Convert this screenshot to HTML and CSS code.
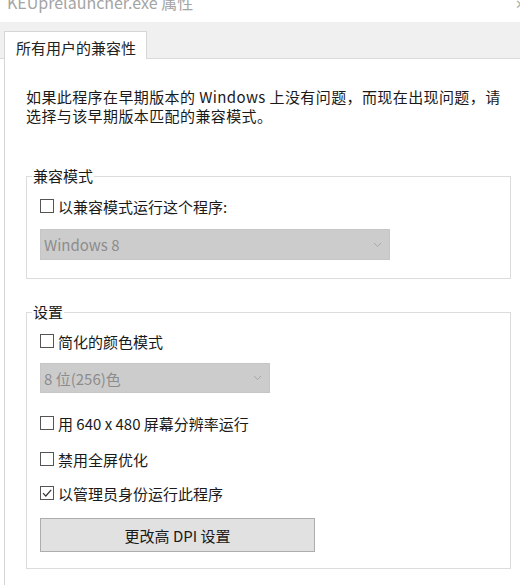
FILE: index.html
```html
<!DOCTYPE html>
<html lang="zh-CN">
<head>
    <meta charset="UTF-8">
    <meta name="viewport" content="width=device-width, initial-scale=1.0">
    <title>KEUprelauncher.exe 属性</title>
    <link rel="stylesheet" href="styles.css">
</head>
<body>
    <div class="window">
        <!-- Title bar (cut off at the top) -->
        <div class="titlebar">
            <span class="title">KEUprelauncher.exe 属性</span>
            <span class="close">✕</span>
        </div>

        <!-- Tabs -->
        <div class="tabs">
            <div class="tab">所有用户的兼容性</div>
        </div>

        <div class="panel">
            <p class="intro">如果此程序在早期版本的 Windows 上没有问题，而现在出现问题，请<br>选择与该早期版本匹配的兼容模式。</p>

            <fieldset class="group group-mode">
                <legend>兼容模式</legend>
                <label class="check row-first">
                    <span class="box"></span>以兼容模式运行这个程序:
                </label>
                <div class="combo combo-wide">
                    <span>Windows 8</span>
                    <svg class="chevron" width="9" height="6" viewBox="0 0 9 6"><path d="M1 1 L4.5 4.5 L8 1" fill="none" stroke="#a8a8a8" stroke-width="1"/></svg>
                </div>
            </fieldset>

            <fieldset class="group group-settings">
                <legend>设置</legend>
                <label class="check row-first">
                    <span class="box"></span>简化的颜色模式
                </label>
                <div class="combo combo-narrow">
                    <span>8 位(256)色</span>
                    <svg class="chevron" width="9" height="6" viewBox="0 0 9 6"><path d="M1 1 L4.5 4.5 L8 1" fill="none" stroke="#a8a8a8" stroke-width="1"/></svg>
                </div>
                <label class="check row-res">
                    <span class="box"></span>用 640 x 480 屏幕分辨率运行
                </label>
                <label class="check row-full">
                    <span class="box"></span>禁用全屏优化
                </label>
                <label class="check row-admin">
                    <span class="box checked">
                        <svg width="12" height="12" viewBox="0 0 12 12"><path d="M2 6.2 L4.8 9 L10.2 2.8" fill="none" stroke="#333" stroke-width="1.2"/></svg>
                    </span>以管理员身份运行此程序
                </label>
                <button class="dpi-button">更改高 DPI 设置</button>
            </fieldset>
        </div>
    </div>
</body>
</html>
```

FILE: styles.css
```css
body {
    margin: 0;
    padding: 0;
    background: #fff;
    font-family: "Microsoft YaHei", "Noto Sans CJK SC", "Noto Sans", sans-serif;
    color: #1e1e1e;
    overflow: hidden;
}

.window {
    width: 520px;
    height: 585px;
    overflow: hidden;
}

.titlebar {
    height: 32px;
    margin-top: -10px;
    display: flex;
    justify-content: space-between;
    align-items: flex-start;
    padding-left: 7px;
    font-size: 16px;
    line-height: 24px;
    color: #a4a4a4;
}

.close {
    font-size: 13px;
    margin-right: -6px;
    margin-top: 2px;
    color: #b0b0b0;
}

.tabs {
    height: 36px;
    background-color: #f0f0f0;
    border-bottom: 1px solid #dadada;
    display: flex;
    align-items: flex-end;
    padding-left: 4px;
}

.tab {
    height: 27px;
    margin-bottom: -1px;
    padding: 0 10px 0 11px;
    background: #fff;
    border: 1px solid #d6d6d6;
    border-bottom: none;
    font-size: 15px;
    line-height: 31px;
    color: #222;
}

.panel {
    margin-left: 4px;
    border-left: 1px solid #d6d6d6;
    padding: 28px 0 0 21px;
    height: 520px;
}

.intro {
    margin: 0;
    font-size: 15px;
    line-height: 19px;
    color: #1a1a1a;
    letter-spacing: 0.4px;
}

.group {
    width: 455px;
    margin: 0;
    border: 1px solid #dcdcdc;
    padding: 0 15px 0 13px;
    display: flex;
    flex-direction: column;
    align-items: flex-start;
}

.group legend {
    padding: 0 1px;
    margin-left: -8px;
    font-size: 15px;
    line-height: 20px;
    color: #1a1a1a;
}

.group-mode {
    margin-top: 41px;
    padding-bottom: 18px;
}

.group-settings {
    margin-top: 23px;
    padding-bottom: 16px;
}

.check {
    display: flex;
    align-items: center;
    height: 20px;
    font-size: 15px;
    color: #1a1a1a;
}

.box {
    width: 12px;
    height: 12px;
    border: 1px solid #555;
    background: #fff;
    margin-right: 4px;
    display: flex;
    align-items: center;
    justify-content: center;
}

.group-mode .row-first {
    margin-top: 10px;
}

.group-settings .row-first {
    margin-top: 9px;
}

.row-res {
    margin-top: 20px;
}

.row-full {
    margin-top: 16px;
}

.row-admin {
    margin-top: 14px;
}

.combo {
    box-sizing: border-box;
    display: flex;
    align-items: center;
    justify-content: space-between;
    background-color: #cccccc;
    border: 1px solid #c6c6c6;
    padding: 0 7px 0 3px;
    font-size: 15px;
    color: #8c8c8c;
}

.combo-wide {
    width: 350px;
    height: 31px;
    margin-top: 13px;
}

.combo-narrow {
    width: 230px;
    height: 30px;
    margin-top: 12px;
}

.dpi-button {
    width: 275px;
    height: 34px;
    margin-top: 15px;
    background-color: #e1e1e1;
    border: 1px solid #adadad;
    font-family: inherit;
    font-size: 15px;
    color: #1a1a1a;
    padding: 0;
}
```
